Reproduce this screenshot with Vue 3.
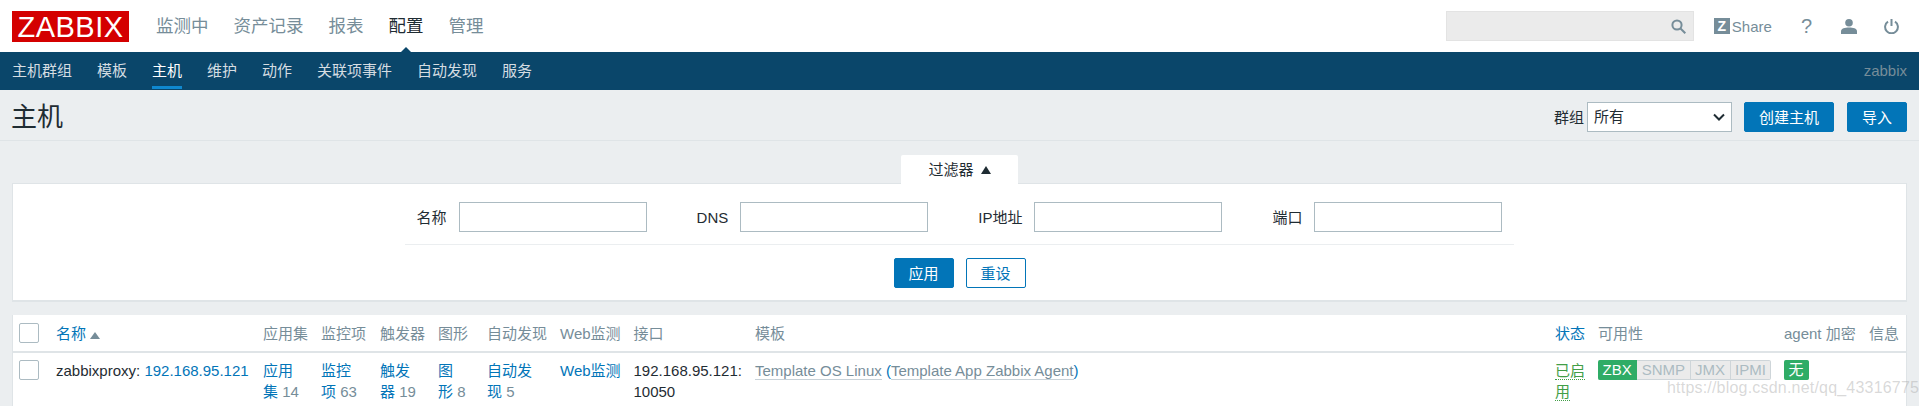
<template>
  <div class="page">
    <header class="topbar">
      <div class="logo">ZABBIX</div>
      <nav class="mainnav">
        <a v-for="m in mainMenu" :key="m" :class="{ on: m === '配置' }">{{ m }}</a>
      </nav>
      <div class="tools">
        <div class="search">
          <svg width="15" height="15" viewBox="0 0 15 15" fill="none" stroke="#768d99" stroke-width="2">
            <circle cx="6" cy="6" r="4.6" />
            <path d="M9.5 9.5 L14.3 14.3" />
          </svg>
        </div>
        <a class="share"><span class="zmark">Z</span>Share</a>
        <span class="help">?</span>
        <svg class="user" width="16" height="15" viewBox="0 0 16 15" fill="#768d99">
          <circle cx="8" cy="3.8" r="3.8" />
          <path d="M0 15 V12.5 C0 9.5 4 8.6 8 8.6 C12 8.6 16 9.5 16 12.5 V15 Z" />
        </svg>
        <svg class="power" width="15" height="15" viewBox="0 0 15 15" fill="none" stroke="#768d99" stroke-width="2">
          <path d="M4 2.6 A6.4 6.4 0 1 0 11 2.6" />
          <path d="M7.5 0 V7" />
        </svg>
      </div>
    </header>

    <nav class="subnav">
      <a v-for="s in subMenu" :key="s" :class="{ on: s === '主机' }">{{ s }}</a>
      <span class="server">zabbix</span>
    </nav>

    <div class="titlebar">
      <h1>主机</h1>
      <div class="actions">
        <label>群组</label>
        <div class="select">所有
          <svg width="12" height="8" viewBox="0 0 12 8" fill="none" stroke="#1f2c33" stroke-width="2">
            <path d="M1 1.5 L6 6.5 L11 1.5" />
          </svg>
        </div>
        <button class="btn wide">创建主机</button>
        <button class="btn">导入</button>
      </div>
    </div>

    <div class="tabrow">
      <div class="tab">过滤器<i class="arrow-up"></i></div>
    </div>
    <section class="filter">
      <div class="fields">
        <div v-for="f in filters" :key="f" class="field">
          <label>{{ f }}</label>
          <input type="text" />
        </div>
      </div>
      <div class="filter-btns">
        <button class="btn">应用</button>
        <button class="btn ghost">重设</button>
      </div>
    </section>

    <section class="hosts">
      <div class="row head">
        <div><span class="check"></span></div>
        <div><a>名称</a><i class="arrow-sort"></i></div>
        <div v-for="h in heads" :key="h">{{ h }}</div>
        <div><a>状态</a></div>
        <div>可用性</div>
        <div>agent 加密</div>
        <div>信息</div>
      </div>
      <div class="row body">
        <div><span class="check"></span></div>
        <div>zabbixproxy: <a>192.168.95.121</a></div>
        <div><a>应用<br />集</a> <span class="num">14</span></div>
        <div><a>监控<br />项</a> <span class="num">63</span></div>
        <div><a>触发<br />器</a> <span class="num">19</span></div>
        <div><a>图<br />形</a> <span class="num">8</span></div>
        <div><a>自动发<br />现</a> <span class="num">5</span></div>
        <div><a>Web监测</a></div>
        <div>192.168.95.121:<br />10050</div>
        <div class="tpl"><u>Template OS Linux</u> <a>(</a><u>Template App Zabbix Agent</u><a>)</a></div>
        <div class="status"><span>已启</span><br /><span>用</span></div>
        <div class="avail">
          <span class="tag green">ZBX</span><span class="tag">SNMP</span><span class="tag">JMX</span><span class="tag">IPMI</span>
        </div>
        <div><span class="tag green solo">无</span></div>
        <div></div>
      </div>
    </section>

    <div class="watermark">https://blog.csdn.net/qq_43316775</div>
  </div>
</template>

<script setup>
const mainMenu = ["监测中", "资产记录", "报表", "配置", "管理"];
const subMenu = ["主机群组", "模板", "主机", "维护", "动作", "关联项事件", "自动发现", "服务"];
const filters = ["名称", "DNS", "IP地址", "端口"];
const heads = ["应用集", "监控项", "触发器", "图形", "自动发现", "Web监测", "接口", "模板"];
</script>

<style>
html,
body {
  margin: 0;
  background: #ebeef0;
}
</style>

<style scoped>
.page {
  position: relative;
  height: 406px;
  overflow: hidden;
  background: #ebeef0;
  color: #1f2c33;
  font: 15px/21px "Liberation Sans", "Noto Sans CJK SC", sans-serif;
}
a {
  color: #0275b8;
}

/* top bar */
.topbar {
  height: 52px;
  background: #fff;
  display: flex;
  align-items: center;
  padding: 0 12px;
  box-sizing: border-box;
}
.logo {
  width: 117px;
  height: 31px;
  background: #d40000;
  color: #fff;
  font-size: 29px;
  line-height: 32px;
  letter-spacing: 0.5px;
  text-align: center;
}
.mainnav {
  display: flex;
  gap: 25px;
  margin-left: 27px;
  font-size: 17.5px;
}
.mainnav a {
  color: #768d99;
  position: relative;
}
.mainnav a.on {
  color: #1f2c33;
}
.mainnav a.on::after {
  content: "";
  position: absolute;
  left: 7px;
  top: 31px;
  border: 10px solid transparent;
  border-top: 0;
  border-bottom-color: #0a466a;
}
.tools {
  margin-left: auto;
  display: flex;
  align-items: center;
}
.search {
  width: 248px;
  height: 30px;
  box-sizing: border-box;
  background: #ebebeb;
  border: 1px solid #e3e3e3;
  display: flex;
  align-items: center;
  justify-content: flex-end;
  padding-right: 7px;
}
.share {
  display: flex;
  align-items: center;
  color: #768d99;
  margin-left: 20px;
}
.zmark {
  width: 16px;
  height: 16px;
  background: #768d99;
  color: #fff;
  font-size: 14px;
  font-weight: bold;
  line-height: 16px;
  text-align: center;
  margin-right: 2px;
}
.help {
  color: #768d99;
  font-size: 20px;
  margin-left: 29px;
}
.user {
  margin-left: 29px;
}
.power {
  margin-left: 27px;
  margin-right: 8px;
}

/* second level menu */
.subnav {
  height: 38px;
  background: #0a466a;
  display: flex;
  gap: 25px;
  padding: 0 12px;
  align-items: stretch;
  box-sizing: border-box;
}
.subnav a {
  color: #d5dde2;
  line-height: 38px;
  height: 37px;
  box-sizing: border-box;
}
.subnav a.on {
  color: #fff;
  border-bottom: 3px solid #0f88cf;
}
.server {
  margin-left: auto;
  color: #768d99;
  line-height: 38px;
}

/* title row */
.titlebar {
  height: 51px;
  box-sizing: border-box;
  display: flex;
  align-items: center;
  justify-content: space-between;
  padding: 4px 12px 0;
  border-bottom: 1px solid #dfe4e7;
}
h1 {
  margin: 0 0 0 -1px;
  font-size: 26px;
  font-weight: normal;
  line-height: 46px;
}
.actions {
  display: flex;
  align-items: center;
}
.select {
  width: 145px;
  height: 30px;
  box-sizing: border-box;
  background: #fff;
  border: 1px solid #acbbc2;
  margin: 0 12px 0 3px;
  padding-left: 6px;
  line-height: 28px;
  display: flex;
  align-items: center;
  justify-content: space-between;
}
.select svg {
  margin-right: 6px;
}
.btn {
  width: 60px;
  height: 30px;
  box-sizing: border-box;
  background: #0275b8;
  border: 1px solid #0275b8;
  border-radius: 2px;
  color: #fff;
  font: inherit;
  padding: 0;
}
.btn.wide {
  width: 90px;
  margin-right: 13px;
}
.btn.ghost {
  background: #fff;
  color: #0275b8;
}

/* filter */
.tabrow {
  display: flex;
  justify-content: center;
  margin-top: 14px;
  position: relative;
  z-index: 1;
}
.tab {
  width: 117px;
  height: 29px;
  box-sizing: border-box;
  background: #fff;
  border-radius: 2px 2px 0 0;
  display: flex;
  align-items: center;
  justify-content: center;
  gap: 7px;
}
.arrow-up {
  border: 5px solid transparent;
  border-top: 0;
  border-bottom: 8px solid #1f2c33;
}
.filter {
  margin: -1px 12px 0;
  height: 119px;
  box-sizing: border-box;
  background: #fff;
  border: 1px solid #dfe4e7;
  border-width: 1px 1px 2px;
  padding-top: 18px;
  display: flex;
  flex-direction: column;
  align-items: center;
}
.fields {
  display: flex;
  gap: 50px;
  padding: 0 12px 12px;
  border-bottom: 1px solid #ebeef0;
}
.field {
  display: flex;
  align-items: center;
  gap: 12px;
}
.field input {
  width: 188px;
  height: 30px;
  box-sizing: border-box;
  border: 1px solid #acbbc2;
  background: #fff;
  padding: 0;
}
.filter-btns {
  display: flex;
  gap: 12px;
  margin-top: 13px;
}

/* hosts table */
.hosts {
  margin: 13px 12px 0;
  min-height: 100px;
  background: #fff;
  border: solid #dfe4e7;
  border-width: 0 1px;
}
.row {
  display: grid;
  grid-template-columns: 43px 207px 58px 59px 58px 49px 73px 73.5px 121.5px 800px 43px 186px 85px 37px;
}
.head {
  height: 38px;
  border-bottom: 2px solid #dfe4e7;
  box-sizing: border-box;
  color: #768d99;
  align-items: center;
}
.body {
  padding-top: 7px;
}
.check {
  display: block;
  width: 20px;
  height: 20px;
  margin-left: 6px;
  box-sizing: border-box;
  background: #fff;
  border: 1px solid #acbbc2;
  border-radius: 2px;
}
.arrow-sort {
  display: inline-block;
  margin-left: 4px;
  border: 5px solid transparent;
  border-top: 0;
  border-bottom: 7px solid #768d99;
}
.num {
  color: #768d99;
}
.tpl {
  color: #768d99;
}
.tpl u {
  text-decoration: none;
  border-bottom: 1px solid #c8d2d8;
}
.status {
  color: #429e47;
}
.status span {
  border-bottom: 1px dotted #429e47;
}
.avail {
  display: flex;
}
.tag {
  display: block;
  height: 20px;
  line-height: 18px;
  padding: 0 4.5px;
  box-sizing: border-box;
  background: #ebebeb;
  border: 1px solid #ced5d9;
  border-left-width: 0;
  color: #acbbc2;
}
.tag.green {
  background: #2fac66;
  border-color: #2fac66;
  color: #fff;
  border-radius: 2px 0 0 2px;
}
.tag.solo {
  width: 25px;
  border-radius: 2px;
  padding: 0;
  text-align: center;
}
.avail .tag:last-child {
  border-radius: 0 2px 2px 0;
}

.watermark {
  position: absolute;
  left: 1667px;
  top: 376px;
  color: rgba(170, 170, 170, 0.45);
  font-size: 16px;
  line-height: 24px;
  letter-spacing: 0.2px;
  white-space: nowrap;
}
</style>
